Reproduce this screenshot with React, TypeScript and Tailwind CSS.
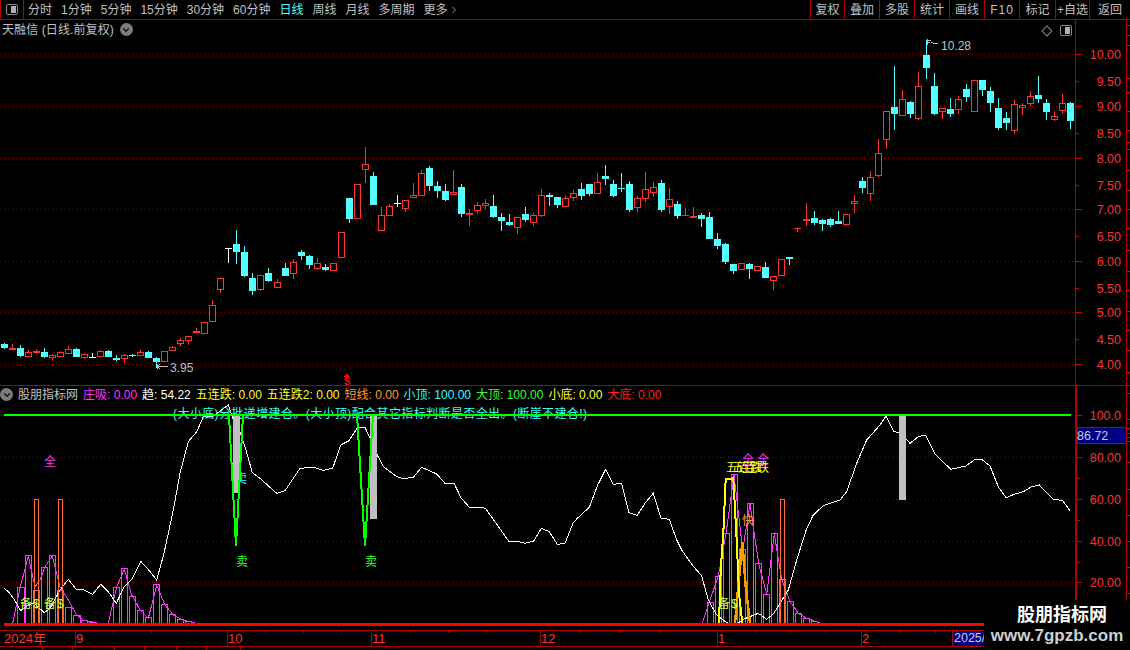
import { ChevronDown, ChevronRight } from "lucide-react";

type Candle = [string, number, number, number?, number?];

// measured off the picture: kind, body top, body bottom, wick top, wick bottom
const seg1: Candle[] = [
  ["c", 372, 384, 369, 387], ["r", 384, 389, 373, 389], ["c", 384, 408, 375, 411], ["h", 397, 410, 390, 410],
  ["r", 393, 398, 388, 402], ["c", 396, 411, 384, 414], ["h", 405, 413, 402, 423], ["h", 397, 410, 393, 410],
  ["h", 388, 401, 378, 401], ["c", 388, 411, 384, 411], ["h", 403, 413, 403, 417], ["w", 411, 413, 399, 413],
  ["h", 394, 410, 390, 410], ["c", 393, 411, 390, 411], ["c", 414, 419, 405, 423], ["h", 406, 418, 402, 429],
  ["c", 405, 408, 402, 411], ["h", 397, 407, 390, 407], ["c", 396, 414, 394, 414], ["c", 414, 426, 411, 444],
  ["h", 394, 426], ["h", 382, 392, 378, 392], ["h", 361, 372, 354, 378], ["h", 349, 362, 349, 375],
  ["r", 334, 339, 324, 339], ["h", 307, 341], ["h", 256, 305, 240, 305], ["h", 175, 209, 175, 219],
  ["w", 84, 86, 84, 129], ["c", 72, 96, 30, 132], ["c", 96, 168, 78, 171], ["c", 174, 213, 159, 225],
  ["h", 166, 209, 166, 213], ["c", 159, 183, 144, 186], ["h", 187, 203, 177, 203], ["c", 144, 168, 129, 168],
  ["h", 127, 161, 117, 177], ["c", 96, 108, 90, 120], ["c", 108, 135, 105, 147], ["h", 130, 146, 114, 150],
  ["c", 141, 150, 132, 153], ["h", 130, 152], ["h", 37, 113],
];
const seg2: Candle[] = [
  ["c", 174, 237, 174, 249], ["h", 133, 237], ["h", 73, 89, 21, 129], ["c", 108, 195, 96, 195],
  ["h", 226, 272, 202, 272], ["h", 199, 227, 193, 227], ["w", 189, 191, 165, 201], ["h", 181, 206, 181, 216],
  ["h", 166, 173, 129, 173], ["h", 100, 167, 90, 167], ["c", 84, 138, 78, 153], ["c", 138, 153, 123, 174],
  ["c", 153, 180, 132, 183], ["h", 157, 164, 90, 164], ["c", 141, 222, 132, 231], ["r", 220, 225, 208, 258],
  ["h", 196, 212, 186, 222], ["h", 190, 197, 177, 208], ["c", 198, 231, 165, 234], ["c", 231, 243, 220, 273],
  ["c", 246, 255, 222, 258], ["h", 232, 263, 232, 282], ["c", 222, 240, 201, 246], ["h", 226, 248, 220, 258],
  ["h", 166, 227, 147, 231], ["c", 165, 171, 159, 198], ["c", 171, 195, 171, 204], ["h", 175, 200, 168, 200],
  ["h", 160, 173, 150, 183], ["c", 147, 168, 129, 180], ["c", 132, 162, 132, 168], ["h", 127, 161, 99, 161],
  ["c", 108, 117, 75, 135], ["c", 132, 168, 120, 171], ["c", 144, 147, 99, 156], ["c", 132, 210, 123, 216],
  ["h", 175, 203, 168, 216], ["h", 148, 176, 96, 186], ["h", 142, 158, 126, 171], ["c", 129, 210, 120, 216],
  ["h", 178, 200, 144, 222], ["c", 192, 228, 183, 237], ["r", 225, 228, 204, 228], ["r", 228, 233, 201, 233],
];
const seg3: Candle[] = [
  ["c", 555, 566, 548, 590], ["c", 561, 627, 546, 627], ["c", 627, 648, 609, 657], ["c", 642, 696, 639, 702],
  ["c", 702, 723, 702, 733], ["h", 700, 719], ["c", 702, 717, 699, 747], ["h", 708, 724],
  ["c", 712, 743, 696, 743], ["h", 739, 754, 739, 780], ["h", 688, 737], ["c", 681, 687, 681, 705],
  ["r", 595, 598, 595, 606], ["r", 567, 572, 519, 588], ["c", 564, 579, 543, 584], ["c", 570, 581, 567, 603],
  ["c", 567, 585, 564, 591], ["c", 573, 581, 543, 581], ["h", 553, 584, 553, 588], ["h", 514, 521, 495, 549],
  ["c", 453, 473, 441, 489], ["h", 442, 491, 423, 513], ["h", 370, 437, 327, 441], ["h", 244, 329, 244, 357],
  ["c", 231, 252, 108, 300], ["h", 208, 257, 180, 257], ["c", 216, 252, 213, 264], ["h", 169, 267, 126, 270],
  ["c", 75, 114, 30, 147], ["c", 168, 252, 129, 255], ["h", 235, 245, 235, 267], ["c", 237, 252, 204, 261],
  ["h", 208, 239, 199, 252], ["c", 177, 201, 162, 216], ["h", 151, 245], ["c", 150, 180, 150, 198],
  ["c", 183, 219, 171, 246], ["c", 234, 294, 204, 300], ["c", 264, 279, 246, 300], ["h", 223, 302, 210, 312],
  ["h", 226, 233, 219, 255], ["h", 199, 221, 183, 228], ["c", 195, 207, 138, 219], ["c", 219, 246, 207, 270],
  ["h", 259, 270, 243, 273], ["h", 220, 243, 192, 252], ["c", 219, 273, 216, 297],
];

const CYAN = "#54ffff";
const RED = "#ff3232";

const rows = [
  ...seg1.map((c) => ({ c, off: 220 })),
  ...seg2.map((c) => ({ c, off: 140 })),
  ...seg3.map((c) => ({ c, off: 30 })),
];

const scr = (list: number[][], ox: number, oy: number) =>
  list.map(([x, y]) => `${(ox + x / 3).toFixed(1)},${(oy + y / 3).toFixed(1)}`);

const whiteLine = [
  ...scr(
    [[12, 445], [25, 455], [42, 477], [62, 512], [85, 495], [100, 490], [108, 495], [133, 518], [150, 505], [180, 450], [205, 418], [230, 450], [250, 449], [278, 463], [302, 433], [325, 455], [349, 490], [372, 440], [396, 418], [422, 364], [446, 390], [470, 420], [492, 340], [520, 210], [540, 100]],
    0, 440,
  ),
  ...scr(
    [[25, 125], [50, 95], [70, 50], [100, 48], [145, 15], [160, 60], [180, 95], [195, 140], [217, 218], [240, 235], [290, 280], [315, 272], [360, 205], [400, 202], [430, 211], [458, 205], [482, 135], [507, 122], [533, 82], [555, 82], [570, 115], [592, 165], [610, 200], [650, 230], [670, 236], [700, 232]],
    180, 400,
  ),
  ...scr(
    [[20, 52], [65, 72], [90, 100], [117, 100], [138, 143], [163, 172], [200, 172], [212, 176], [283, 276], [305, 273], [330, 280], [356, 273], [379, 235], [403, 245], [427, 283], [450, 280], [475, 218], [487, 205], [523, 172], [548, 105], [572, 58], [595, 103], [620, 100], [642, 188], [667, 196], [690, 160], [715, 130], [738, 204], [763, 208], [785, 270], [800, 300], [830, 343]],
    415, 450,
  ),
  ...scr(
    [[65, 408], [85, 480], [110, 525], [140, 548], [163, 558], [190, 538], [235, 520], [260, 538], [280, 522], [300, 490], [325, 450], [350, 360], [380, 265], [400, 225], [430, 197], [480, 180], [500, 155], [530, 70], [560, 0]],
    680, 440,
  ),
  ...scr(
    [[0, 135], [18, 108], [42, 155], [60, 158], [90, 190], [115, 170], [137, 165], [165, 222], [212, 268], [258, 258], [285, 238], [305, 238], [330, 258], [355, 320], [378, 353], [405, 342], [430, 335], [455, 320], [478, 315], [520, 357], [548, 362], [570, 392]],
    880, 380,
  ),
].join(" ");

// magenta hollow bars: x from, x to, top (zoomed units)
const barsA = [[52, 72, 440], [76, 95, 346], [100, 118, 450], [124, 142, 380], [148, 167, 346], [172, 191, 450], [196, 215, 502], [220, 240, 526], [244, 263, 540], [268, 290, 547], [340, 358, 442], [364, 383, 385], [388, 407, 468], [412, 431, 510], [436, 455, 532], [460, 479, 433], [484, 503, 492], [508, 527, 523], [532, 551, 537], [556, 575, 543]];
const barsB = [[80, 98, 487], [106, 124, 408], [130, 148, 280], [154, 172, 103], [178, 197, 327], [202, 220, 190], [226, 245, 370], [250, 268, 462], [274, 293, 280], [298, 316, 418], [322, 340, 484], [346, 364, 520], [370, 388, 534], [394, 412, 543]];

const pinkA = scr([[38, 549], [60, 445], [85, 348], [105, 440], [120, 420], [135, 380], [157, 348], [180, 440], [205, 480], [230, 525], [250, 540], [290, 548]], 0, 440).join(" ");
const pinkB = scr([[325, 549], [350, 440], [373, 388], [395, 465], [420, 510], [445, 535], [470, 435], [495, 495], [520, 525], [550, 540], [585, 549]], 0, 440).join(" ");
const pinkC = scr([[67, 549], [88, 487], [115, 408], [138, 282], [162, 105], [188, 330], [210, 192], [236, 372], [260, 462], [283, 282], [305, 418], [330, 484], [355, 520], [380, 535], [420, 549]], 680, 440).join(" ");
const yellowLine = scr([[117, 549], [122, 390], [130, 280], [137, 118], [160, 115], [170, 300], [177, 460], [187, 549]], 680, 440).join(" ");
const orangeLine = scr([[165, 549], [175, 440], [187, 305], [197, 440], [210, 549]], 680, 440).join(" ");

const priceLabels = ["10.00", "9.50", "9.00", "8.50", "8.00", "7.50", "7.00", "6.50", "6.00", "5.50", "5.00", "4.50", "4.00"];
const priceY = [54.5, 81, 106.5, 133, 158, 185, 209.5, 236, 261, 288, 312.5, 339, 364.5];
const gridUp = [54.5, 106.5, 158.5, 209.5, 261.5, 312.5, 364.5];
const gridDown = [457.5, 499.5, 541.5, 582.5];
const rightTicksUp = [25, 35, 45, 78, 92, 111, 130, 142, 149, 170, 190, 209, 228, 250, 271, 290, 311, 330, 350, 372];
const rightTicksDown = [393, 419, 428, 433, 437, 441, 462, 489, 515, 541, 567, 593];

const menu = ["分时", "1分钟", "5分钟", "15分钟", "30分钟", "60分钟", "日线", "周线", "月线", "多周期"];
const actions = [
  ["复权", "w-[34px]"], ["叠加", "w-[35px]"], ["多股", "w-[35px]"], ["统计", "w-[35px]"], ["画线", "w-[35px]"],
  ["F10", "w-[35px] tracking-[1px]"], ["标记", "w-[36px]"], ["+自选", "w-[34px]"], ["返回", "w-[41px]"],
];
const stats = [
  ["庄吸", "0.00", "text-[#ff33ff]"], ["趋", "54.22", "text-white"], ["五连跌", "0.00", "text-[#ffff33]"],
  ["五连跌2", "0.00", "text-[#ffff33]"], ["短线", "0.00", "text-[#ff9933]"], ["小顶", "100.00", "text-[#33ffff]"],
  ["大顶", "100.00", "text-[#33ff33]"], ["小底", "0.00", "text-[#ffff33]"], ["大底", "0.00", "text-[#ff2020]"],
];
const months = [
  ["2024年", "w-[75px] pl-[4px]"], ["9", "w-[152px]"], ["10", "w-[144px]"],
  ["11", "w-[169px]"], ["12", "w-[177px]"], ["1", "w-[144px]"], ["2", "w-[91px]"],
];
const timeTicks = [113, 151, 189, 265, 303, 341, 410, 448, 486, 580, 620, 660, 755, 790, 825, 900, 935, 1010];

const PanelIcon = () => (
  <div className="flex h-[11px] w-[12px] justify-end rounded-[2px] border border-[#8a8a8a] p-px">
    <div className="w-[5px] bg-[#b0b0b0]" />
  </div>
);

const RoundIcon = () => (
  <div className="flex h-[13px] w-[13px] items-center justify-center rounded-full bg-[#7c7c7c]">
    <ChevronDown size={10} strokeWidth={3} color="#111" />
  </div>
);

const Candles = () => (
  <g>
    {rows.map(({ c, off }, i) => {
      const [kind, top, bot, wt, wb] = c;
      const px = Math.floor(4.5 + 8.015 * i);
      const y1 = Math.round(off + top / 3);
      const y2 = Math.round(off + bot / 3);
      const w1 = Math.round(off + (wt ?? top) / 3);
      const w2 = Math.round(off + (wb ?? bot) / 3);
      const color = kind === "c" ? CYAN : kind === "w" ? "#ffffff" : RED;
      return (
        <g key={i}>
          <line x1={px + 0.5} x2={px + 0.5} y1={w1} y2={w2} stroke={color} />
          {kind === "h" ? (
            <rect x={px - 2.5} y={y1 + 0.5} width={6} height={Math.max(y2 - y1 - 1, 1)} fill="#000" stroke={color} />
          ) : (
            <rect x={px - 3} y={y1} width={7} height={Math.max(y2 - y1, 1)} fill={color} />
          )}
        </g>
      );
    })}
  </g>
);

const Toolbar = () => (
  <div className="flex h-[20px] shrink-0 border-b border-[#b00000] text-[12px] text-[#c0c0c0]">
    <div className="flex w-[24px] items-center justify-center border-x border-[#b00000]">
      <PanelIcon />
    </div>
    <div className="flex items-center gap-[9px] pl-[4px]">
      {menu.map((m) => (
        <span key={m} className={m === "日线" ? "text-[#54ffff]" : ""}>
          {m}
        </span>
      ))}
      <span className="flex items-center">
        更多
        <ChevronRight size={12} strokeWidth={1.5} />
      </span>
    </div>
    <div className="ml-auto flex">
      {actions.map(([a, w]) => (
        <div key={a} className={`flex items-center justify-center whitespace-nowrap border-l border-[#b00000] ${w}`}>
          {a}
        </div>
      ))}
    </div>
  </div>
);

const UpperPane = () => (
  <div className="relative flex h-[366px] shrink-0 border-b border-[#b00000]">
    <svg className="block h-[365px] w-[1075px]" viewBox="0 20 1075 365" shapeRendering="crispEdges">
      {gridUp.map((y) => (
        <line key={y} x1={0} x2={1075} y1={y} y2={y} stroke="#900000" strokeDasharray="1 3" />
      ))}
      <Candles />
      <g fill="#c0c0c0" fontSize={12}>
        <text x={170} y={372}>3.95</text>
        <text x={941} y={49.5}>10.28</text>
      </g>
      <path d="M157 364v5M157 366.5h11M157 366.5l3 -2M157 366.5l3 2" stroke="#c0c0c0" fill="none" />
      <path d="M927 39v6M927 40h4M927 42.5h3M931 42l3 1.5h4" stroke="#c0c0c0" fill="none" />
      <path d="M347 373.5l-3 3h6z" fill="#ff0000" />
      <text x={347} y={384.5} textAnchor="middle" fontSize={10} fontWeight={700} fill="#ff0000">
        S
      </text>
    </svg>
    <div className="absolute left-[2px] top-0 flex h-[19px] items-center gap-[6px] text-[12px] text-[#c0c0c0]">
      <span className="tracking-[0.1px]">天融信 (日线.前复权)</span>
      <RoundIcon />
    </div>
    <div className="absolute left-[1043px] top-[5px] flex items-center gap-[9px]">
      <div className="h-[8px] w-[8px] rotate-45 border border-[#8a8a8a]" />
      <PanelIcon />
    </div>
    <div className="w-[52px] border-x border-[#b00000]">
      <svg className="block h-[365px] w-[50px]" viewBox="1076 20 50 365" fontSize={12.5} shapeRendering="crispEdges">
        {priceLabels.map((p, i) => (
          <g key={p}>
            <line x1={1076} x2={i % 2 ? 1079 : 1082} y1={priceY[i]} y2={priceY[i]} stroke="#d00000" />
            <text x={1121} y={priceY[i] + 4.5} textAnchor="end" fill={RED}>
              {p}
            </text>
          </g>
        ))}
      </svg>
    </div>
    <svg className="block h-[365px] w-[3px]" viewBox="1127 20 3 365" shapeRendering="crispEdges">
      {rightTicksUp.map((y) => (
        <line key={y} x1={1127} x2={1130} y1={y + 0.5} y2={y + 0.5} stroke="#d00000" />
      ))}
    </svg>
  </div>
);

const LowerPane = () => (
  <div className="relative flex h-[245px] shrink-0 border-b border-[#b00000]">
    <svg className="block h-[244px] w-[1075px]" viewBox="0 386 1075 244" shapeRendering="crispEdges" fontSize={12}>
      {gridDown.map((y) => (
        <line key={y} x1={0} x2={1075} y1={y} y2={y} stroke="#900000" strokeDasharray="1 3" />
      ))}
      {barsA.map(([a, b, t]) => (
        <rect key={a} x={Math.round(a / 3) + 0.5} y={Math.round(440 + t / 3) + 0.5} width={Math.round((b - a) / 3)} height={623 - Math.round(440 + t / 3)} fill="none" stroke="#ff33ff" />
      ))}
      {barsB.map(([a, b, t]) => (
        <rect key={a} x={Math.round(680 + a / 3) + 0.5} y={Math.round(440 + t / 3) + 0.5} width={Math.round((b - a) / 3)} height={623 - Math.round(440 + t / 3)} fill="none" stroke="#ff33ff" />
      ))}
      <polyline points={pinkA} fill="none" stroke="#ff33ff" />
      <polyline points={pinkB} fill="none" stroke="#ff33ff" />
      <polyline points={pinkC} fill="none" stroke="#ff33ff" />
      <polyline points={whiteLine} fill="none" stroke="#ffffff" />
      {[34, 58, 780].map((x) => (
        <rect key={x} x={x + 0.5} y={499.5} width={4} height={124} fill="none" stroke="#ff6a3c" />
      ))}
      <text x={173} y={417.5} fill="#33ffff" textLength={414} lengthAdjust="spacing">
        (大小底)分批递增建仓。(大小顶)配合其它指标判断是否全出。(断崖不建仓!)
      </text>
      <text x={235} y={482.5} fill="#33ffff">卖</text>
      <rect x={233} y={415} width={7} height={78} fill="#c0c0c0" />
      <rect x={370} y={415} width={7} height={104} fill="#c0c0c0" />
      <rect x={899} y={415} width={7} height={85} fill="#c0c0c0" />
      <polyline points="229,415 236,546 243,415" fill="none" stroke="#00ff00" strokeWidth={2} />
      <polyline points="357,415 365,546 373,415" fill="none" stroke="#00ff00" strokeWidth={2} />
      <rect x={4} y={414} width={1067} height={2} fill="#00ff00" />
      <polyline points={orangeLine} fill="none" stroke="#ff9900" strokeWidth={2.5} />
      <polyline points={yellowLine} fill="none" stroke="#ffff00" strokeWidth={2} />
      <rect x={4} y={623} width={1071} height={3} fill="#ff0000" />
      <g fill="#ccff55">
        <text x={20} y={607.5}>备</text>
        <text x={33} y={607.5}>$</text>
        <text x={44} y={607.5}>备</text>
        <text x={57} y={607.5}>$</text>
        <text x={718} y={607.5}>备</text>
        <text x={731} y={607.5}>$</text>
      </g>
      <g fill="#ff33ff">
        <text x={44} y={466}>全</text>
        <text x={742} y={464}>全</text>
        <text x={757} y={464}>全</text>
      </g>
      <g fill="#ffff33">
        <text x={726} y={471.5}>五连跌</text>
        <text x={733} y={471.5}>五连跌</text>
      </g>
      <text x={742} y={524.5} fill="#ff9933">快</text>
      <g fill="#33ff33">
        <text x={236} y={565.5}>卖</text>
        <text x={365} y={565.5}>卖</text>
      </g>
    </svg>
    <div className="absolute left-0 top-0 flex h-[17px] items-center gap-[5px] text-[12px] whitespace-nowrap">
      <RoundIcon />
      <span className="text-[#c0c0c0]">股朋指标网</span>
      {stats.map(([k, v, cls]) => (
        <span key={k} className={cls}>
          {k}: {v}
        </span>
      ))}
    </div>
    <div className="w-[52px] border-l-2 border-r border-[#b00000]">
      <svg className="block h-[244px] w-[49px]" viewBox="1077 386 49 244" fontSize={12.5} shapeRendering="crispEdges">
        {[["100.0", 415], ["80.00", 457.5], ["60.00", 499.5], ["40.00", 541.5], ["20.00", 582.5]].map(([t, y]) => (
          <g key={t}>
            <line x1={1077} x2={1082} y1={y} y2={y} stroke="#d00000" />
            <text x={1121} y={Number(y) + 4.5} textAnchor="end" fill={RED}>
              {t}
            </text>
          </g>
        ))}
        {[478.5, 520.5, 562.5].map((y) => (
          <line key={y} x1={1077} x2={1080} y1={y} y2={y} stroke="#d00000" />
        ))}
        <rect x={1077} y={427.5} width={50} height={16} fill="#000080" stroke="#c00000" />
        <text x={1077} y={440} fill="#c8c8e8">86.72</text>
      </svg>
    </div>
    <svg className="block h-[244px] w-[3px]" viewBox="1127 386 3 244" shapeRendering="crispEdges">
      {rightTicksDown.map((y) => (
        <line key={y} x1={1127} x2={1130} y1={y + 0.5} y2={y + 0.5} stroke="#d00000" />
      ))}
    </svg>
  </div>
);

const TimeRow = () => (
  <div className="relative flex h-[16px] shrink-0 items-stretch border-b border-[#b00000] text-[13px] text-[#ff3232]">
    {months.map(([m, cls], i) => (
      <div key={m} className={`flex items-center ${cls} ${i ? "border-l border-[#b00000]" : ""}`}>
        {m}
      </div>
    ))}
    <div className="flex w-[34px] items-center border-x border-[#b00000] bg-[#000080] pl-[1px] text-[12.5px] text-[#c8c8e8]">
      2025/
    </div>
    {timeTicks.map((x) => (
      <span key={x} style={{ left: x }} className="absolute top-0 h-[2px] w-px bg-[#b00000]" />
    ))}
  </div>
);

const BottomRow = () => (
  <div className="flex flex-1">
    {["w-[43px]", "w-[30px]", "w-[42px]", "w-[30px]", "w-[32px]", "w-[30px]", "w-[34px]"].map((w, i) => (
      <div key={i} className={`${w} border-r border-[#b00000]`} />
    ))}
  </div>
);

export default function App() {
  return (
    <div className="relative flex h-[650px] w-[1130px] flex-col overflow-hidden bg-black font-['Liberation_Sans','Noto_Sans_CJK_SC',sans-serif]">
      <Toolbar />
      <UpperPane />
      <LowerPane />
      <TimeRow />
      <BottomRow />
      {/* site stamp sits over the corner of the chart */}
      <div className="absolute bottom-0 right-0 flex h-[50px] w-[146px] flex-col items-center justify-center bg-black">
        <span className="pl-[10px] text-[18px] font-bold leading-[22px] text-white">股朋指标网</span>
        <span className="text-[17px] font-bold leading-[20px] text-[#cfcfcf]">www.7gpzb.com</span>
      </div>
    </div>
  );
}
